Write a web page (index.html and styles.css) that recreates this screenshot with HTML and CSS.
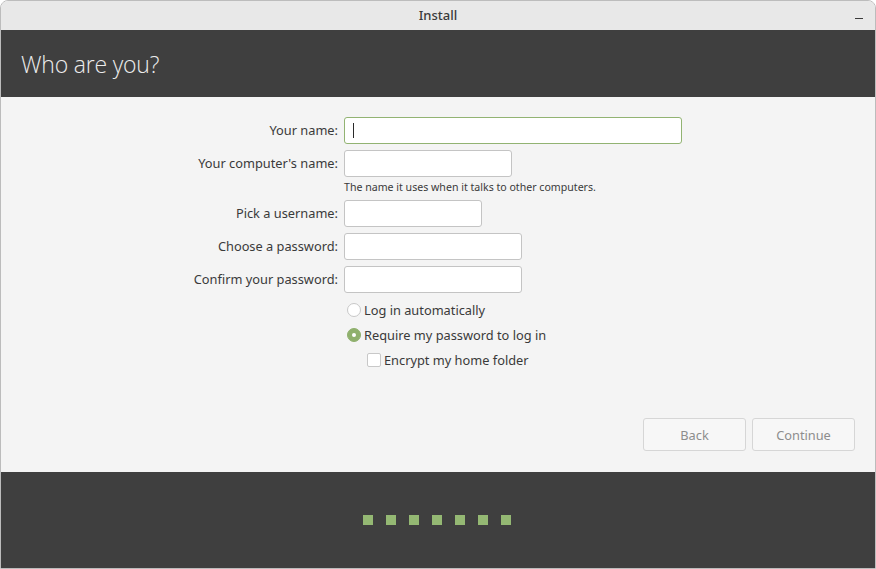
FILE: index.html
```html
<!DOCTYPE html>
<html>
<head>
<meta charset="utf-8">
<link rel="stylesheet" href="styles.css">
</head>
<body>
<div class="window">
  <div class="titlebar">
    <span class="title">Install</span>
    <span class="minimize"></span>
  </div>
  <div class="header"><h1>Who are you?</h1></div>
  <div class="content">
    <div class="form">
      <label class="lbl">Your name:</label>
      <div class="field"><div class="input focused w-name"><span class="caret"></span></div></div>

      <label class="lbl">Your computer's name:</label>
      <div class="field"><div class="input w-comp"></div></div>

      <span></span>
      <div class="hint">The name it uses when it talks to other computers.</div>

      <label class="lbl">Pick a username:</label>
      <div class="field"><div class="input w-user"></div></div>

      <label class="lbl">Choose a password:</label>
      <div class="field"><div class="input w-pass"></div></div>

      <label class="lbl">Confirm your password:</label>
      <div class="field"><div class="input w-pass"></div></div>
    </div>
    <div class="options">
      <div class="opt radio-row first"><span class="radio"></span><span>Log in automatically</span></div>
      <div class="opt radio-row"><span class="radio checked"></span><span>Require my password to log in</span></div>
      <div class="opt check-row"><span class="check"></span><span>Encrypt my home folder</span></div>
    </div>
    <div class="buttons">
      <button class="btn">Back</button>
      <button class="btn">Continue</button>
    </div>
  </div>
  <div class="footer">
    <div class="dots">
      <span class="dot"></span><span class="dot"></span><span class="dot"></span><span class="dot"></span><span class="dot"></span><span class="dot"></span><span class="dot"></span>
    </div>
  </div>
</div>
</body>
</html>
```

FILE: styles.css
```css
html, body {
  margin: 0;
  padding: 0;
  background: #ffffff;
}
body {
  font-family: "Noto Sans", "DejaVu Sans", sans-serif;
  font-size: 13px;
  color: #3c3c3c;
}
.window {
  width: 874px;
  height: 567px;
  border: 1px solid #bcbcbc;
  border-radius: 8px 8px 0 0;
  overflow: hidden;
  display: flex;
  flex-direction: column;
  background: #f4f4f4;
}
.titlebar {
  height: 29px;
  background: #e8e8e8;
  display: flex;
  align-items: center;
  justify-content: center;
  position: relative;
}
.title {
  font-size: 13px;
  font-weight: 500;
  color: #3a3a3a;
  margin-bottom: 2px;
}
.minimize {
  position: absolute;
  right: 12px;
  top: 17px;
  width: 8px;
  height: 1px;
  background: #3a3a3a;
}
.header {
  height: 67px;
  background: #3f3f3f;
  display: flex;
  align-items: center;
  padding-left: 20px;
}
.header h1 {
  margin: 0;
  font-family: "Open Sans", "Noto Sans", sans-serif;
  font-weight: 300;
  font-size: 23px;
  color: #ececec;
  letter-spacing: -0.2px;
}
.content {
  flex: 1;
  display: flex;
  flex-direction: column;
  padding-top: 20px;
}
.form {
  display: grid;
  grid-template-columns: 337px auto;
  column-gap: 6px;
  row-gap: 6px;
  align-items: center;
}
.lbl {
  text-align: right;
  white-space: nowrap;
  font-size: 12.8px;
  color: #3a3a3a;
  margin-top: -2px;
}
.field {
  display: flex;
}
.input {
  height: 25px;
  background: #ffffff;
  border: 1px solid #c4c4c4;
  border-radius: 3px;
  display: flex;
  align-items: center;
  box-sizing: content-box;
}
.input.focused {
  border-color: #92b372;
}
.caret {
  width: 1px;
  height: 15px;
  background: #2a2a2a;
  margin-left: 8px;
}
.w-name { width: 336px; }
.w-comp { width: 166px; }
.w-user { width: 136px; }
.w-pass { width: 176px; }
.hint {
  font-size: 10.6px;
  color: #3a3a3a;
  margin-top: -3px;
  line-height: 14px;
}
.options {
  display: flex;
  flex-direction: column;
  padding-left: 346px;
  margin-top: 10px;
  gap: 11px;
}
.opt {
  display: flex;
  align-items: center;
  gap: 3px;
  font-size: 12.8px;
  color: #3a3a3a;
  height: 14px;
}
.radio {
  width: 12px;
  height: 12px;
  border: 1px solid #c8c8c8;
  border-radius: 50%;
  background: #ffffff;
  position: relative;
}
.radio.checked {
  background: #8fb06d;
  border-color: #8fb06d;
}
.radio.checked::after {
  content: "";
  position: absolute;
  width: 4px;
  height: 4px;
  border-radius: 50%;
  background: #ffffff;
  left: 4px;
  top: 4px;
}
.check-row {
  padding-left: 20px;
}
.check {
  width: 12px;
  height: 12px;
  border: 1px solid #c8c8c8;
  border-radius: 2px;
  background: #ffffff;
}
.buttons {
  display: flex;
  justify-content: flex-end;
  gap: 6px;
  padding-right: 20px;
  margin-top: 51px;
}
.btn {
  width: 103px;
  height: 33px;
  background: #f7f7f7;
  border: 1px solid #d6d6d6;
  border-radius: 3px;
  font-family: "Noto Sans", sans-serif;
  font-size: 12.8px;
  color: #8d8d8d;
  padding: 0;
}
.footer {
  height: 96px;
  background: #3f3f3f;
  display: flex;
  justify-content: center;
  align-items: center;
}
.dots {
  display: flex;
  gap: 13px;
  margin-right: 2px;
}
.dot {
  width: 10px;
  height: 10px;
  background: #94b873;
}
```
